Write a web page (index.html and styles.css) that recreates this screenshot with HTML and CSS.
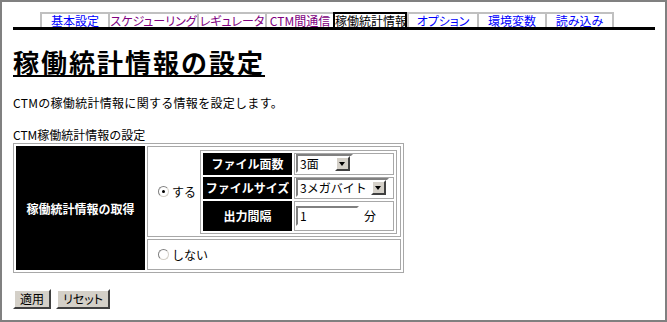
FILE: index.html
```html
<!DOCTYPE html>
<html>
  <head>
    <meta charset="utf-8">
    <title>稼働統計情報の設定</title>
    <link rel="stylesheet" href="styles.css">
  </head>
  <body>
    <div class="frame">
      <div class="tabs">
        <a class="tab w68">基本設定</a>
        <a class="tab w89 visited">スケジューリング</a>
        <a class="tab w68 visited">レギュレータ</a>
        <a class="tab w68 visited">CTM間通信</a>
        <span class="tab w74 active">稼働統計情報</span>
        <a class="tab w70">オプション</a>
        <a class="tab w68">環境変数</a>
        <a class="tab w69 last">読み込み</a>
      </div>

      <h1 class="title">稼働統計情報の設定</h1>
      <p class="desc">CTMの稼働統計情報に関する情報を設定します。</p>

      <div class="caption">CTM稼働統計情報の設定</div>
      <table class="outer">
        <tr>
          <th rowspan="2" class="head">稼働統計情報の取得</th>
          <td class="opt opt-on">
            <div class="on-row">
              <label class="radio-label"><span class="radio checked"></span>する</label>
              <table class="inner">
                <tr>
                  <th class="lbl">ファイル面数</th>
                  <td class="val r1">
                    <div class="select s-small"><span class="sel-text">3面</span><span class="sel-btn"></span></div>
                  </td>
                </tr>
                <tr>
                  <th class="lbl">ファイルサイズ</th>
                  <td class="val r2">
                    <div class="select s-wide"><span class="sel-text">3メガバイト</span><span class="sel-btn"></span></div>
                  </td>
                </tr>
                <tr>
                  <th class="lbl">出力間隔</th>
                  <td class="val r3">
                    <span class="textbox">1</span><span class="unit">分</span>
                  </td>
                </tr>
              </table>
            </div>
          </td>
        </tr>
        <tr>
          <td class="opt opt-off">
            <label class="radio-label"><span class="radio"></span>しない</label>
          </td>
        </tr>
      </table>

      <div class="actions">
        <button class="btn">適用</button>
        <button class="btn">リセット</button>
      </div>
    </div>
  </body>
</html>
```

FILE: styles.css
```css
html,
body {
  margin: 0;
  padding: 0;
}

body {
  font-family: "Noto Sans CJK JP", "DejaVu Sans", sans-serif;
  font-size: 12px;
  color: #000;
  background: #fff;
}

.frame {
  box-sizing: border-box;
  width: 667px;
  height: 322px;
  border: 2px solid #808080;
  padding: 10px 10px 0 11px;
}

/* tabs */
.tabs {
  display: flex;
  padding-left: 27px;
  border-bottom: 3px solid #000;
}

.tab {
  box-sizing: border-box;
  height: 15px;
  line-height: 14px;
  border-top: 2px solid #c0c0c0;
  border-left: 2px solid #c0c0c0;
  text-align: center;
  color: #0000ff;
  white-space: nowrap;
  font-feature-settings: "palt";
}

.tab.visited {
  color: #800080;
}

.tab.active {
  color: #000;
  border: 2px solid #000;
  border-bottom: none;
}

.tab.last {
  border-right: 2px solid #c0c0c0;
}

.w68 { width: 68px; }
.w69 { width: 69px; }
.w70 { width: 70px; }
.w74 { width: 74px; }
.w89 { width: 89px; }

/* heading */
.title {
  margin: 16px 0 0 0;
  font-size: 26px;
  line-height: 32px;
  font-weight: bold;
  text-decoration: underline;
  text-underline-offset: 2px;
  letter-spacing: 2px;
}

.desc {
  margin: 18px 0 0 0;
  line-height: 14px;
  letter-spacing: 0.3px;
}

.caption {
  margin-top: 18px;
  line-height: 14px;
}

/* outer table */
table {
  border-collapse: separate;
}

.outer {
  border: 1px solid #a8a8a8;
  border-spacing: 2px;
  margin: 1px 0 0 0;
}

.outer > tbody > tr > th,
.outer > tbody > tr > td {
  border: 1px solid #a8a8a8;
  padding: 0;
}

.head {
  width: 127px;
  background: #000;
  color: #fff;
  font-weight: bold;
  text-align: center;
  border-color: #000 !important;
}

.opt {
  width: 252px;
  vertical-align: middle;
}

.opt-on {
  height: 89px;
}

.opt-off {
  height: 29px;
}

.on-row {
  display: flex;
  align-items: center;
  padding-left: 10px;
}

.radio-label {
  display: flex;
  align-items: center;
  gap: 3px;
  white-space: nowrap;
}

.on-row .radio-label {
  width: 42px;
}

.opt-off .radio-label {
  padding-left: 10px;
}

.radio {
  box-sizing: border-box;
  width: 11px;
  height: 11px;
  border-radius: 50%;
  border: 1px solid #808080;
  border-right-color: #d4d0c8;
  border-bottom-color: #d4d0c8;
  background: #fff;
  position: relative;
}

.radio.checked::after {
  content: "";
  position: absolute;
  left: 3px;
  top: 3px;
  width: 3px;
  height: 3px;
  border-radius: 50%;
  background: #000;
}

/* inner table */
.inner {
  border: 1px solid #a8a8a8;
  border-spacing: 2px;
}

.inner th,
.inner td {
  border: 1px solid #a8a8a8;
  padding: 0;
}

.lbl {
  width: 87px;
  background: #000;
  color: #fff;
  font-weight: bold;
  text-align: center;
  border-color: #000 !important;
  white-space: nowrap;
}

.val {
  width: 97px;
  padding-left: 1px !important;
}

.r1 { height: 20px; }
.r2 { height: 20px; }
.r3 { height: 28px; }

.select {
  box-sizing: border-box;
  display: flex;
  align-items: center;
  height: 19px;
  border: 2px solid;
  border-color: #808080 #fff #fff #808080;
  background: #fff;
  padding: 0 1px 0 2px;
}

.s-small {
  width: 57px;
}

.s-wide {
  width: 93px;
}

.sel-text {
  flex: 1;
  line-height: 14px;
}

.sel-btn {
  box-sizing: border-box;
  width: 15px;
  height: 15px;
  background: #d4d0c8;
  border: 2px solid;
  border-color: #fff #404040 #404040 #fff;
  position: relative;
}

.sel-btn::after {
  content: "";
  position: absolute;
  left: 2px;
  top: 4px;
  border-left: 3.5px solid transparent;
  border-right: 3.5px solid transparent;
  border-top: 4px solid #000;
}

.textbox {
  box-sizing: border-box;
  display: inline-block;
  vertical-align: middle;
  width: 63px;
  height: 20px;
  line-height: 16px;
  border: 2px solid;
  border-color: #808080 #fff #fff #808080;
  padding-left: 2px;
}

.unit {
  vertical-align: middle;
  margin-left: 5px;
}

/* buttons */
.actions {
  display: flex;
  gap: 5px;
  margin-top: 16px;
}

.btn {
  font-family: inherit;
  font-size: 12px;
  font-feature-settings: "palt";
  height: 20px;
  line-height: 14px;
  padding: 0 5px;
  background: #d4d0c8;
  color: #000;
  border: 2px solid;
  border-color: #fff #404040 #404040 #fff;
  border-radius: 0;
}
```
